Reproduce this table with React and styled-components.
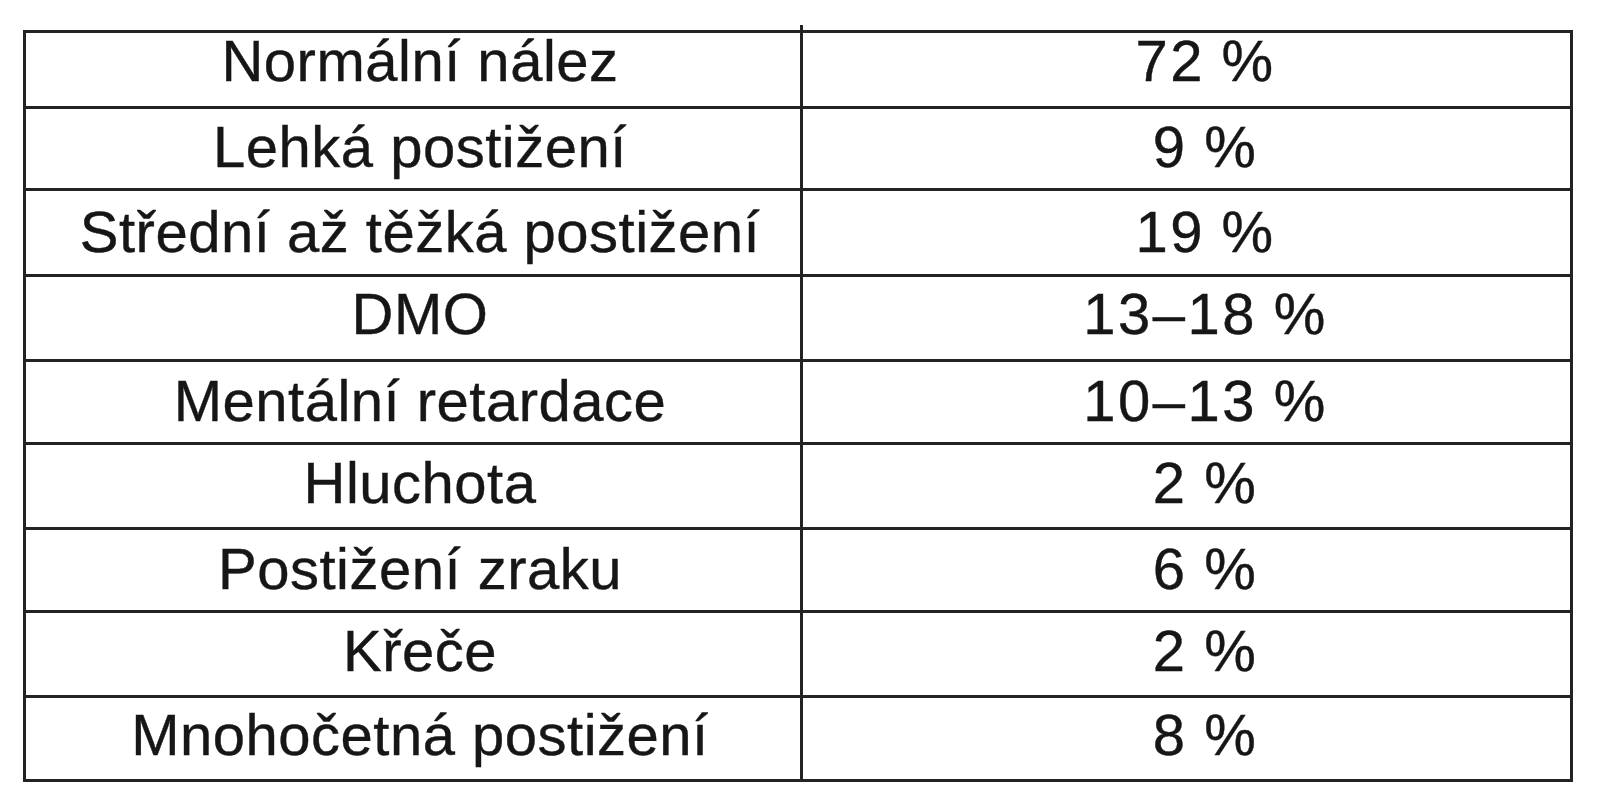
import React from 'react';
import styled, { createGlobalStyle, css } from 'styled-components';

const GlobalStyle = createGlobalStyle`
  html, body {
    margin: 0;
    padding: 0;
    background: #ffffff;
  }
`;

const rows = [
  { label: 'Normální nález', value: '72 %', height: 76, lift: 18 },
  { label: 'Lehká postižení', value: '9 %', height: 82, lift: 4 },
  { label: 'Střední až těžká postižení', value: '19 %', height: 86, lift: 2 },
  { label: 'DMO', value: '13–18 %', height: 85, lift: 8 },
  { label: 'Mentální retardace', value: '10–13 %', height: 83, lift: 3 },
  { label: 'Hluchota', value: '2 %', height: 85, lift: 6 },
  { label: 'Postižení zraku', value: '6 %', height: 83, lift: 3 },
  { label: 'Křeče', value: '2 %', height: 85, lift: 6 },
  { label: 'Mnohočetná postižení', value: '8 %', height: 81, lift: 8 }
];

const Frame = styled.div`
  display: grid;
  grid-template-columns: 777px 767px;
  grid-template-rows: ${props => props.heights.map(h => `${h}px`).join(' ')};
  width: 1550px;
  box-sizing: border-box;
  margin: 30px 0 0 23px;
  border: 3px solid #232323;
`;

const Cell = styled.div`
  position: relative;
  display: flex;
  align-items: center;
  justify-content: center;
  box-sizing: border-box;
  padding-left: ${props => (props.left ? '14px' : '38px')};
  padding-bottom: ${props => props.lift}px;
  font-family: 'Liberation Sans', Arial, sans-serif;
  font-size: 58px;
  line-height: 1;
  letter-spacing: ${props => (props.left ? '0.5px' : '2.5px')};
  word-spacing: ${props => (props.left ? '0' : '-2px')};
  color: #161616;
  -webkit-text-stroke: 0.4px #161616;
  white-space: nowrap;
  border-bottom: ${props => (props.last ? 'none' : '3px solid #232323')};

  ${props =>
    props.left &&
    css`
      border-right: 3px solid #232323;
    `}

  ${props =>
    props.first &&
    !props.left &&
    css`
      &::before {
        content: '';
        position: absolute;
        left: -3px;
        top: -8px;
        width: 3px;
        height: 8px;
        background: #232323;
      }
    `}
`;

const App = () => {
  return (
    <>
      <GlobalStyle />
      <Frame heights={rows.map(r => r.height)}>
        {rows.map((row, i) => (
          <React.Fragment key={row.label}>
            <Cell
              left
              first={i === 0}
              last={i === rows.length - 1}
              lift={row.lift}
            >
              {row.label}
            </Cell>
            <Cell first={i === 0} last={i === rows.length - 1} lift={row.lift}>
              {row.value}
            </Cell>
          </React.Fragment>
        ))}
      </Frame>
    </>
  );
};

export default App;
